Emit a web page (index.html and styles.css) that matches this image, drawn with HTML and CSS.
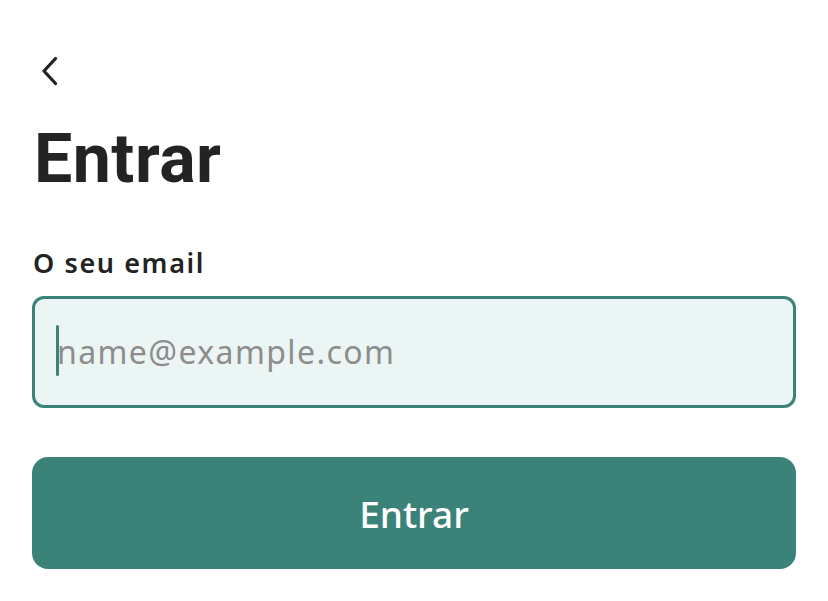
FILE: index.html
```html
<!DOCTYPE html>
<html lang="pt">
<head>
<meta charset="utf-8">
<title>Entrar</title>
<link rel="stylesheet" href="styles.css">
</head>
<body>
<main class="page">
  <button class="back" aria-label="Voltar">
    <svg width="20" height="30" viewBox="0 0 20 30" fill="none" stroke="#222222" stroke-width="3.3" stroke-linecap="round" stroke-linejoin="round"><path d="M15.5 2.5 L4 15 L15.5 27.5"/></svg>
  </button>
  <h1 class="title">Entrar</h1>
  <label class="label" for="email">O seu email</label>
  <div class="field">
    <span class="caret"></span>
    <input id="email" class="input" type="email" placeholder="name@example.com">
  </div>
  <button class="submit">Entrar</button>
</main>
</body>
</html>
```
FILE: styles.css
```css
html, body {
  margin: 0;
  padding: 0;
  background: #ffffff;
}
.page {
  display: flex;
  flex-direction: column;
  align-items: stretch;
  padding: 56px 32px 0 32px;
  font-family: "Noto Sans", "Open Sans", sans-serif;
  color: #232323;
}
.back {
  align-self: flex-start;
  display: flex;
  background: none;
  border: 0;
  padding: 0;
  margin: 0 0 0 8px;
  width: 20px;
  height: 30px;
}
.title {
  margin: 33px 0 0 2px;
  font-family: Roboto, "Noto Sans", sans-serif;
  font-size: 68px;
  font-weight: 700;
  line-height: 80px;
  letter-spacing: 0.5px;
}
.label {
  margin-top: 46px;
  margin-left: 1px;
  font-size: 27px;
  font-weight: 600;
  line-height: 36px;
  letter-spacing: 1.6px;
}
.field {
  position: relative;
  margin-top: 15px;
  height: 112px;
  box-sizing: border-box;
  border: 3px solid #3b8379;
  border-radius: 12px;
  background: #ebf5f4;
  display: flex;
  align-items: center;
}
.caret {
  position: absolute;
  left: 21px;
  top: 26px;
  width: 3px;
  height: 51px;
  border-radius: 2px;
  background: #3b8379;
}
.input {
  flex: 1;
  height: 100%;
  border: 0;
  background: transparent;
  padding: 0 0 2px 22px;
  font-family: "Noto Sans", "Open Sans", sans-serif;
  font-size: 32px;
  letter-spacing: 1.4px;
  color: #232323;
  outline: none;
}
.input::placeholder {
  color: #8d8d8d;
  opacity: 1;
}
.submit {
  margin-top: 49px;
  height: 112px;
  border: 0;
  border-radius: 16px;
  background: #3b8379;
  color: #ffffff;
  font-family: "Noto Sans", "Open Sans", sans-serif;
  font-size: 37px;
  font-weight: 500;
}
```
